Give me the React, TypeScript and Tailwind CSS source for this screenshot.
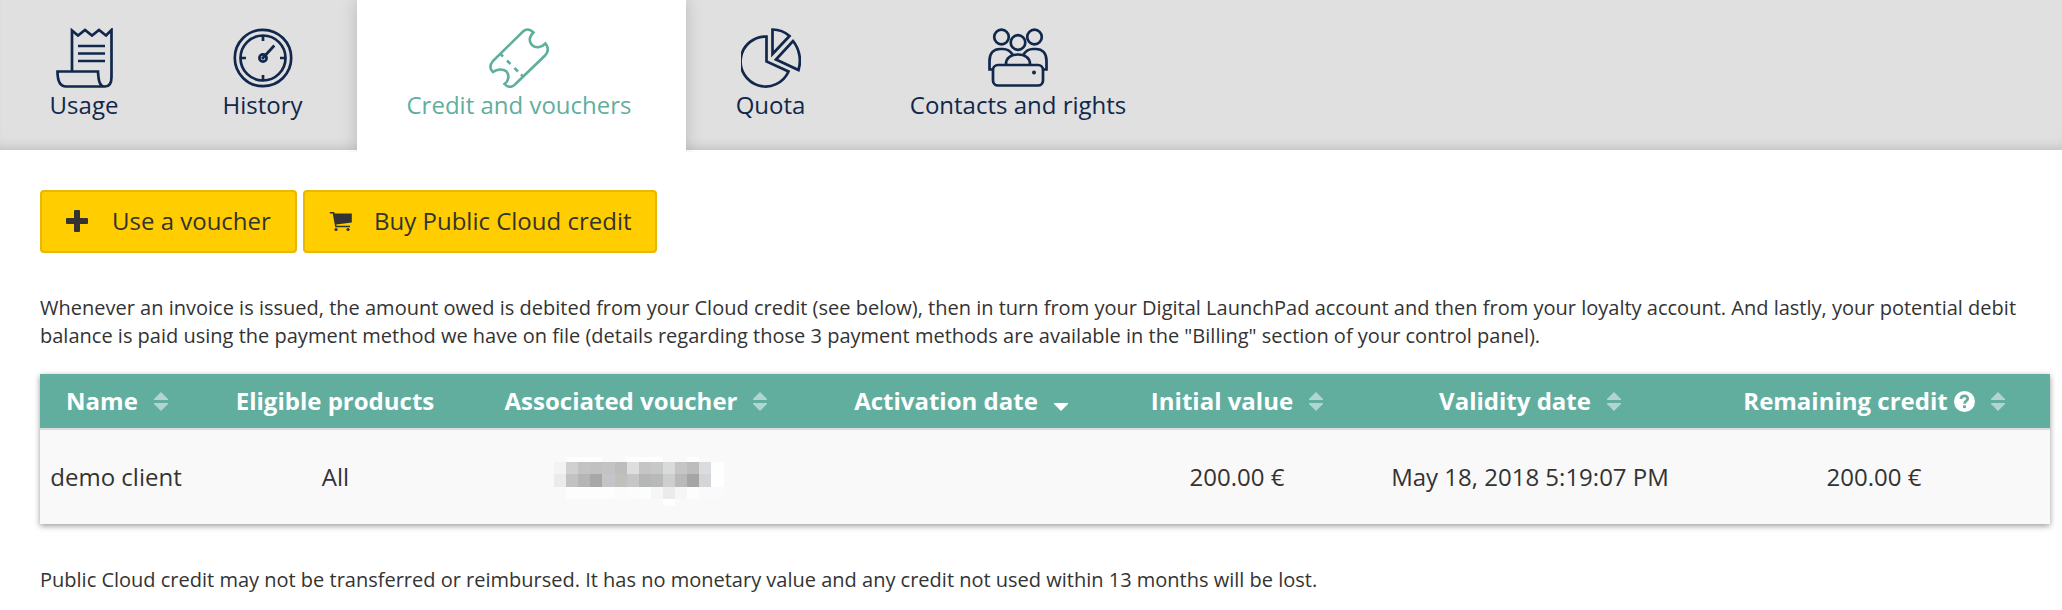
import React from "react";

const stroke = { fill: "none", stroke: "currentColor", strokeWidth: 2.7 };

function UsageIcon() {
  return (
    <svg className="h-[60px] w-[60px]" viewBox="0 0 60 60" {...stroke}>
      <path d="M18 43V2.5L24 7.5L31 2L38 7.5L45 2L52 7.5L57.5 2V49C57.5 55.5 55 58.500 51 58.500C46 58.500 44.500 54 44 43.500H3.500C3.500 53 5.500 58.500 12 58.500H51" />
      <path d="M24 18H51M24 25.500H51M24 33H51" />
    </svg>
  );
}

function HistoryIcon() {
  return (
    <svg className="h-[60px] w-[60px]" viewBox="0 0 60 60" {...stroke}>
      <circle cx="30" cy="30" r="28.200" />
      <circle cx="30" cy="30" r="22.500" />
      <circle cx="30" cy="30" r="3.600" />
      <path d="M30 7.500V13M30 47V52.500M7.500 30H13M47 30H52.500M29 31L41.300 17.500" />
    </svg>
  );
}

function TicketIcon() {
  return (
    <svg className="h-[60px] w-[60px]" viewBox="0 0 60 60" {...stroke} strokeWidth={2.600}>
      <path d="M34 3.500C37 .8 41 .8 44.500 4.500C39.500 9 40 14 43 17C46.500 20.500 52 20 56.500 15.500C60 20 59 24 56.500 27L26.500 56C23 60 18.500 59.500 15.500 56C20 53 20.500 47 17.500 43.500C14 40.500 8 41 4 44C.5 41 .5 37 4 33Z" />
      <path d="M11.500 26L14 28.500M18 32.500L21.500 36M25.500 40L29 43.500M32 46.500L34.500 49" />
    </svg>
  );
}

function QuotaIcon() {
  return (
    <svg className="h-[60px] w-[60px]" viewBox="0 0 60 60" {...stroke}>
      <path d="M25.500 8.500V33.500L47.500 43.500A25 25 0 1 1 25.500 8.500Z" />
      <path d="M31.500 26V1.500C38 1.500 44 4 48.500 8Z" />
      <path d="M35 31.500L52 13C58.500 21 60.500 32 57.500 42Z" />
    </svg>
  );
}

function ContactsIcon() {
  return (
    <svg className="h-[60px] w-[60px]" viewBox="0 0 60 60" {...stroke}>
      <circle cx="13.500" cy="9" r="7.300" />
      <circle cx="46.500" cy="9" r="7.300" />
      <circle cx="30" cy="14.500" r="7.300" />
      <path d="M5 41.500H1.500V33C1.500 25 6 21 12 21H15C19 21 22 22.500 24.500 26.500M55 41.500H58.500V33C58.500 25 54 21 48 21H45C41 21 38 22.500 35.500 26.500" />
      <path d="M18 36C18 30 23 26.500 30 26.500S42 30 42 36" />
      <rect x="5" y="37" width="50" height="20.500" rx="5" />
      <circle cx="46" cy="44.500" r="2" fill="currentColor" stroke="none" />
    </svg>
  );
}

function Tab({ label, icon, active, className }: { label: string; icon: React.ReactNode; active?: boolean; className: string }) {
  return (
    <a
      className={`flex shrink-0 flex-col items-center pt-7 text-[24px] leading-[34px] ${
        active
          ? "relative z-10 h-[152px] bg-white pr-[5px] text-[#61ae9f] shadow-[0_0_16px_rgba(0,0,0,0.18)] [clip-path:inset(0_-20px_0_-20px)]"
          : "h-[150px] text-[#11274b]"
      } ${className}`}
    >
      {icon}
      <span className="whitespace-nowrap">{label}</span>
    </a>
  );
}

function SortIcon({ desc }: { desc?: boolean }) {
  return (
    <svg className="ml-4 h-[19px] w-[14px] shrink-0" viewBox="0 0 14 19" fill="#fff">
      {!desc && <path d="M7 0L14 7V8H0V7Z" opacity=".5" />}
      <path d="M0 11H14V12L7 19L0 12Z" opacity={desc ? 1 : 0.5} />
    </svg>
  );
}

const columns = "grid grid-cols-[152px_286px_316px_334px_218px_368px_336px]";

const mosaic = [
  "#f2f3f3 #d0d0ce #c3c3c3 #c1c1c1 #c3c3c3 #bdbdbd #dedede #c6c4c5 #c7c8ca #dadada #c5c5c5 #bdbdbd #dbdcde #fdffff",
  "#ebebeb #c2c2c2 #b5b5b3 #a7a7a7 #c4c5c9 #c2c0bd #c6c6c6 #b6b6b6 #b8baba #cececc #b9b9b9 #a5a5a5 #d4d5d8 #ffffff",
  "#f9f9f9 #fdfdfd #fdfdfd #fdfdfd #fdfdfd #fbfbf9 #fbfdfd #fcfefe #f6f6f6 #ebebeb #f6f6f6 #fdfdfd #fafafa #fafafa",
].map((row) => row.split(" "));

function RedactedVoucher() {
  return (
    <svg className="ml-3 mt-2.5 h-[50px] w-[176px]" viewBox="0 0 176 50" shapeRendering="crispEdges" aria-hidden="true">
      <path d="M12 0H48V5H12ZM72 0H109V5H72ZM133 0H145V5H133ZM109 42H121V49H109Z" fill="#fefefe" />
      {mosaic.map((row, r) =>
        row.map((color, c) => <rect key={`${r}-${c}`} x={c * 12.100} y={5 + r * 12.400} width="12.200" height="12.400" fill={color} />),
      )}
    </svg>
  );
}

export default function App() {
  return (
    <div className="h-[610px] w-[2062px] overflow-hidden bg-white font-['Open_Sans',sans-serif] text-[#333]">
      <nav className="flex h-[150px] bg-[#e0e0e0] shadow-[inset_0_-10px_12px_-8px_rgba(0,0,0,0.16)]">
        <Tab label="Usage" className="w-[168px]" icon={<UsageIcon />} />
        <Tab label="History" className="w-[189px]" icon={<HistoryIcon />} />
        <Tab label="Credit and vouchers" className="w-[329px]" icon={<TicketIcon />} active />
        <Tab label="Quota" className="w-[169px]" icon={<QuotaIcon />} />
        <Tab label="Contacts and rights" className="w-[326px]" icon={<ContactsIcon />} />
      </nav>
      <main className="pl-10 pr-3">
        <div className="flex gap-1.5 pt-10 text-[24px]">
          <button className="flex h-[63px] w-[257px] items-center rounded border-2 border-[#e6b800] bg-[#ffcd00] pl-6">
            <svg className="mb-px h-[22px] w-[22px]" viewBox="0 0 22 22" fill="currentColor">
              <path d="M9 0h4a1 1 0 0 1 1 1v7h7a1 1 0 0 1 1 1v4a1 1 0 0 1-1 1h-7v7a1 1 0 0 1-1 1H9a1 1 0 0 1-1-1v-7H1a1 1 0 0 1-1-1V9a1 1 0 0 1 1-1h7V1a1 1 0 0 1 1-1z" />
            </svg>
            <span className="ml-6 whitespace-nowrap pb-0.5">Use a voucher</span>
          </button>
          <button className="flex h-[63px] w-[354px] items-center rounded border-2 border-[#e6b800] bg-[#ffcd00] pl-6">
            <svg className="mt-px h-[20px] w-[24px]" viewBox="0 0 24 20" fill="currentColor">
              <path d="M.8 0h4.200l.8 1.600h17V10.500L7.200 12.500l.3 1.200H21v1.600H6.300L3.700 1.600H.8z" />
              <circle cx="7" cy="17.500" r="1.600" />
              <circle cx="19" cy="17.500" r="1.600" />
            </svg>
            <span className="ml-[21px] whitespace-nowrap pb-0.5">Buy Public Cloud credit</span>
          </button>
        </div>
        <p className="pt-[41px] text-[20px] leading-7 whitespace-nowrap tracking-[0.005px]">
          Whenever an invoice is issued, the amount owed is debited from your Cloud credit (see below), then in turn from your Digital LaunchPad account and then from your loyalty account. And lastly, your potential debit
          <br />
          balance is paid using the payment method we have on file (details regarding those 3 payment methods are available in the "Billing" section of your control panel).
        </p>
        <section className="mt-6 w-[2010px] text-[24px] shadow-[0_2px_6px_rgba(0,0,0,0.4)]">
          <div className={`${columns} h-[56px] items-center justify-items-center border-b-2 border-[#ddd] bg-[#61ae9f] font-bold text-white`}>
            <div className="flex items-center whitespace-nowrap pl-0.5">Name<SortIcon /></div>
            <div className="whitespace-nowrap">Eligible products</div>
            <div className="flex items-center whitespace-nowrap">Associated voucher<SortIcon /></div>
            <div className="flex items-center whitespace-nowrap">Activation date<SortIcon desc /></div>
            <div className="flex items-center whitespace-nowrap">Initial value<SortIcon /></div>
            <div className="flex items-center whitespace-nowrap">Validity date<SortIcon /></div>
            <div className="flex items-center whitespace-nowrap pr-4">
              Remaining credit
              <svg className="ml-1.5 h-[21px] w-[21px]" viewBox="0 0 20 20">
                <circle cx="10" cy="10" r="10" fill="#fff" />
                <path d="M6.500 7.500C7.200 3.600 13.400 3.800 13 7.500C12.900 9.500 10 9.400 10 12.200" fill="none" stroke="#61ae9f" strokeWidth="2.600" />
                <path d="M8.600 13.700h2.800v2.600H8.600z" fill="#61ae9f" />
              </svg>
              <SortIcon />
            </div>
          </div>
          <div className={`${columns} h-[94px] items-center justify-items-center bg-[#f9f9f9]`}>
            <div className="whitespace-nowrap">demo client</div>
            <div className="pl-px">All</div>
            <RedactedVoucher />
            <div />
            <div>200.00 €</div>
            <div className="whitespace-nowrap">May 18, 2018 5:19:07 PM</div>
            <div className="pr-4">200.00 €</div>
          </div>
        </section>
        <p className="pt-[42px] text-[20px] leading-7">
          Public Cloud credit may not be transferred or reimbursed. It has no monetary value and any credit not used within 13 months will be lost.
        </p>
      </main>
    </div>
  );
}
